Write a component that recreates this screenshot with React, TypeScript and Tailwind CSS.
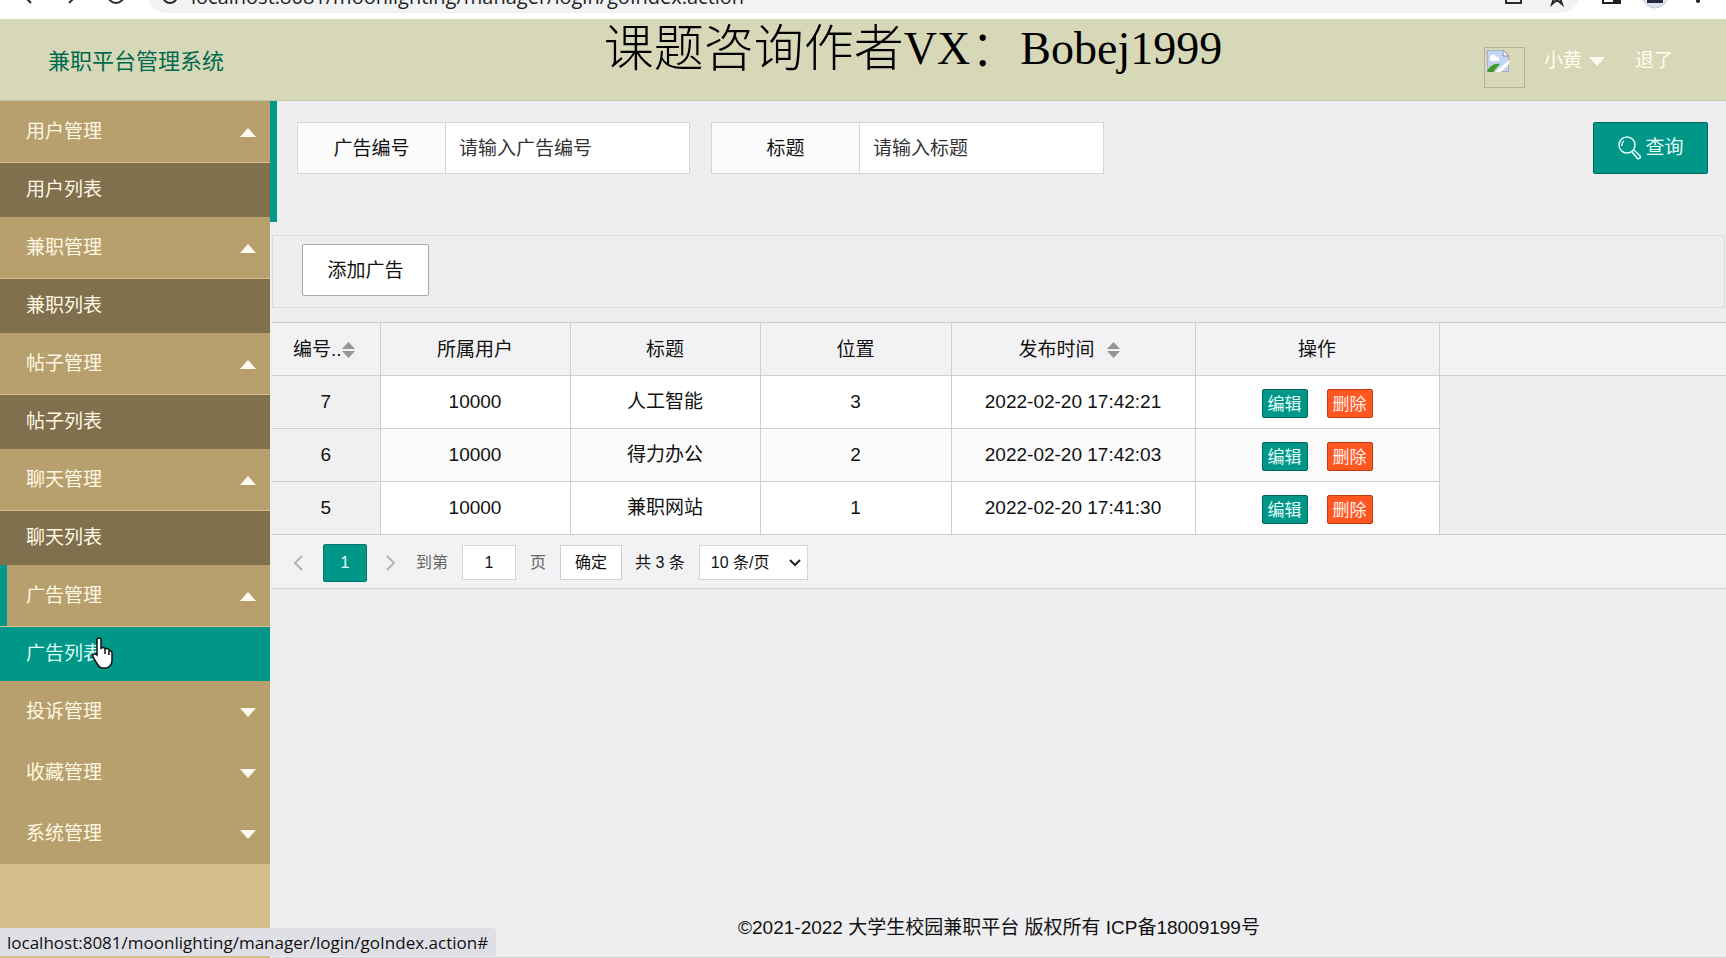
import { useState } from "react";

const menu = [
    { title: "用户管理", child: "用户列表" },
    { title: "兼职管理", child: "兼职列表" },
    { title: "帖子管理", child: "帖子列表" },
    { title: "聊天管理", child: "聊天列表" },
    { title: "广告管理", child: "广告列表" },
    { title: "投诉管理" },
    { title: "收藏管理" },
    { title: "系统管理" },
];

const ads = [
    { id: 7, user: "10000", title: "人工智能", place: 3, time: "2022-02-20 17:42:21" },
    { id: 6, user: "10000", title: "得力办公", place: 2, time: "2022-02-20 17:42:03" },
    { id: 5, user: "10000", title: "兼职网站", place: 1, time: "2022-02-20 17:41:30" },
];

const Triangle = ({ up }: { up?: boolean }) => (
    <svg viewBox="0 0 16 9" className="h-[9px] w-4 fill-[#fffaf0]">
        <path d={up ? "M0 9 8 0l8 9z" : "M0 0h16L8 9z"} />
    </svg>
);

const SortIcon = () => (
    <svg viewBox="0 0 13 18" className="h-[18px] w-[13px] shrink-0 fill-[#959595]">
        <path d="M0 8l6.5-7L13 8zM0 10h13l-6.500 7z" />
    </svg>
);

const BrowserBar = () => (
    <div className="flex h-[19px] shrink-0 items-end overflow-hidden bg-white">
        <svg viewBox="0 0 147 19" className="h-[19px] w-[147px] shrink-0" fill="none" stroke="#2b2b2b" strokeWidth="2">
            <path d="M31 3l-7-7M69 3l7-7" />
            <circle cx="116" cy="-5" r="8" />
        </svg>
        <div className="mb-[6px] flex h-10 grow items-center overflow-hidden rounded-full bg-[#f1f2f4] pt-[8px] pr-4 pl-[14px]">
            <svg viewBox="0 0 18 18" className="h-[18px] w-[18px] shrink-0" fill="none" stroke="#2b2b2b" strokeWidth="2">
                <circle cx="9" cy="8" r="7" />
            </svg>
            <span className="ml-3 grow font-['Open_Sans'] text-[20px] text-[#222]">localhost:8081/moonlighting/manager/login/goIndex.action</span>
            <svg viewBox="0 0 60 20" className="h-5 w-[60px] shrink-0" fill="none" stroke="#2b2b2b" strokeWidth="2">
                <path d="M2 3v13h15v-5M53 2l2 5h5l-4 4 2 6-5-4-5 4 2-6-4-4h5z" />
            </svg>
        </div>
        <svg viewBox="0 0 146 19" className="h-[19px] w-[146px] shrink-0">
            <path d="M23-10h17V3H23z" fill="none" stroke="#222" strokeWidth="2" />
            <path d="M33-9h7V3h-7z" fill="#222" />
            <circle cx="75" cy="-5" r="13" fill="#dfe3f0" stroke="#c5c9d6" />
            <path d="M67-8h16V3H67z" fill="#25293a" />
            <circle cx="118" cy="1" r="2" fill="#222" />
        </svg>
    </div>
);

const Header = () => (
    <header className="flex h-[82px] shrink-0 items-center justify-between border-b border-[#c4c4ae] bg-[#d7d8b8] pt-[4px] pr-[53px] pl-12">
        <h1 className="text-[22px] text-[#006b4f]">兼职平台管理系统</h1>
        <div className="flex items-center text-[19px] text-[#fffff0]">
            <span role="img" aria-label="头像" className="mt-3 h-[41px] w-[41px] border border-[#b3b39c] p-[2px]">
                <svg viewBox="0 0 22 22" className="h-[22px] w-[22px]">
                    <path d="M0 0h16l6 6v16H0z" fill="#c3d5f5" stroke="#8a8f9c" />
                    <path d="M3 8a3 3 0 0 1 6-1 2 2 0 0 1 2 4H3z" fill="#fff" />
                    <path d="M0 22c2-6 7-9 13-8l-7 8z" fill="#3f9a2f" />
                    <path d="M8 22l14-12v4l-8 8z" fill="#fff" />
                    <path d="M16 0v6h6z" fill="#fff" stroke="#8a8f9c" />
                </svg>
            </span>
            <button className="ml-[19px] flex items-center gap-[7px]">小黄<Triangle /></button>
            <a href="#" className="ml-[30px]">退了</a>
        </div>
    </header>
);

const Sidebar = () => {
    const [active, setActive] = useState("广告列表");

    return (
        <nav className="w-[270px] shrink-0 bg-[#d4bd89] text-[19px] text-[#fff8e4]">
            <ul className="bg-[#b7a06d]">
                {menu.map((item) => (
                    <li key={item.title}>
                        <button className={`flex h-[61px] w-full items-center justify-between pt-[2px] pr-[14px] ${item.child === active ? "border-l-[7px] border-[#009688] pl-[19px]" : "pl-[26px]"}`}>
                            {item.title}
                            <Triangle up={!!item.child} />
                        </button>
                        {item.child && (
                            <a
                                href="#"
                                onClick={() => setActive(item.child)}
                                className={`flex h-[55px] items-center border-t border-[#d5bf8c] pl-[26px] ${item.child === active ? "bg-[#009688] text-[#dffff9]" : "bg-[#80704e]"}`}
                            >
                                {item.child}
                            </a>
                        )}
                    </li>
                ))}
            </ul>
        </nav>
    );
};

const SearchField = ({ id, label, hint }: { id: string; label: string; hint: string }) => (
    <div className="flex h-[52px] w-[393px] border border-[#d6d5d6] bg-white">
        <label htmlFor={id} className="flex w-[148px] shrink-0 items-center justify-center border-r border-[#d6d5d6] bg-[#fbfbfb] pt-[2px]">{label}</label>
        <input id={id} placeholder={hint} className="min-w-0 grow px-[13px] pt-[2px] placeholder:text-[#333]" />
    </div>
);

const AdTable = () => (
    <table className="w-full table-fixed border-collapse border-y border-[#cfced0] text-center">
        <colgroup>
            <col className="w-[108px]" />
            <col className="w-[190px]" />
            <col className="w-[190px]" />
            <col className="w-[191px]" />
            <col className="w-[244px]" />
            <col className="w-[244px]" />
            <col />
        </colgroup>
        <thead>
            <tr className="h-[53px] border-b border-[#cfced0] bg-[#f2f1f3] *:border-r *:border-[#cfced0] *:pt-[2px] *:font-normal *:last:border-r-0">
                <th><span className="flex items-center justify-center pr-1">编号..<SortIcon /></span></th>
                <th>所属用户</th>
                <th>标题</th>
                <th>位置</th>
                <th><span className="flex items-center justify-center gap-3 pr-2">发布时间<SortIcon /></span></th>
                <th>操作</th>
                <td></td>
            </tr>
        </thead>
        <tbody>
            {ads.map((ad) => (
                <tr key={ad.id} className="h-[53px] *:border-r *:border-b *:border-[#cfced0] *:bg-white even:*:bg-[#fafafb]">
                    <td className="bg-[#f1f0f1]!">{ad.id}</td>
                    <td>{ad.user}</td>
                    <td>{ad.title}</td>
                    <td>{ad.place}</td>
                    <td>{ad.time}</td>
                    <td>
                        <div className="flex justify-center gap-[19px] pt-[2px] text-[17px]">
                            <button className="h-[29px] w-[46px] rounded-[2px] border border-[#00695c] bg-[#009688] pt-[2px] text-[#e6fffb]">编辑</button>
                            <button className="h-[29px] w-[46px] rounded-[2px] border border-[#c23a10] bg-[#ff5722] pt-[2px] text-[#fff0ea]">删除</button>
                        </div>
                    </td>
                    <td className="border-0! bg-transparent!"></td>
                </tr>
            ))}
        </tbody>
    </table>
);

const Pager = () => (
    <div className="flex h-[54px] items-center border-b border-[#d2d1d3] bg-[#f2f1f3] pt-[2px] pl-[21px] text-[16px]">
        <button aria-label="上一页">
            <svg viewBox="0 0 10 16" className="h-4 w-[10px]" fill="none" stroke="#b5b5b5" strokeWidth="2"><path d="M9 1 2 8l7 7" /></svg>
        </button>
        <button className="ml-5 h-[38px] w-11 rounded-[2px] border border-[#00796b] bg-[#009688] text-[#e6fffb]">1</button>
        <button aria-label="下一页" className="ml-[19px]">
            <svg viewBox="0 0 10 16" className="h-4 w-[10px]" fill="none" stroke="#b5b5b5" strokeWidth="2"><path d="M1 1l7 7-7 7" /></svg>
        </button>
        <label htmlFor="page" className="ml-[20px] text-[#666]">到第</label>
        <input id="page" defaultValue="1" className="ml-[14px] h-[35px] w-[54px] border border-[#d6d5d6] bg-white text-center" />
        <span className="ml-[14px] text-[#666]">页</span>
        <button className="ml-[14px] h-[35px] w-[62px] border border-[#d0cfd1] bg-white">确定</button>
        <span className="ml-[13px]">共 3 条</span>
        <div className="relative ml-[14px]">
            <select aria-label="每页条数" className="h-[35px] w-[109px] appearance-none border border-[#d6d5d6] bg-white pl-[11px]">
                <option>10 条/页</option>
            </select>
            <svg viewBox="0 0 12 8" className="pointer-events-none absolute top-[14px] right-[7px] h-2 w-3" fill="none" stroke="#222" strokeWidth="2"><path d="M1 1l5 5 5-5" /></svg>
        </div>
    </div>
);

const App = () => {
    return (
        <div className="flex min-h-screen flex-col bg-[#eeedef] font-['Liberation_Sans','Noto_Sans_CJK_SC',sans-serif] text-[19px] text-[#111]">
            <BrowserBar />
            <Header />
            <div className="relative flex grow">
                <Sidebar />
                <div className="absolute top-0 left-[270px] h-[121px] w-[7px] bg-[#009688]"></div>
                <main className="flex min-w-0 grow flex-col pl-[2px]">
                    <form className="flex h-[134px] items-start gap-[21px] pt-[21px] pr-[18px] pl-[25px]">
                        <SearchField id="adId" label="广告编号" hint="请输入广告编号" />
                        <SearchField id="adTitle" label="标题" hint="请输入标题" />
                        <button type="button" className="ml-auto flex h-[52px] w-[115px] items-center justify-center gap-1 rounded-[2px] border border-[#00695c] bg-[#009688] text-[#e6fffb]">
                            <svg viewBox="0 0 24 24" className="h-6 w-6" fill="none" stroke="currentColor" strokeWidth="1.500">
                                <circle cx="10" cy="9" r="8" />
                                <path d="M5 10a5 5 0 0 1 2-5M15 16l5 6a1 1 0 0 0 3-2l-6-6" />
                            </svg>
                            查询
                        </button>
                    </form>
                    <div className="mr-[1px] mb-[14px] flex h-[73px] items-start border border-[#dcdbdd] pt-2 pl-[29px]">
                        <button className="h-[52px] w-[127px] rounded-[2px] border border-[#aaa] bg-white pt-[2px]">添加广告</button>
                    </div>
                    <AdTable />
                    <Pager />
                    <footer className="mt-auto flex h-[58px] items-center justify-center border-b border-[#d2d1d3]">
                        ©2021-2022 大学生校园兼职平台 版权所有 ICP备18009199号
                    </footer>
                </main>

                {/* barra de estado */}
                <div className="absolute bottom-[2px] left-0 flex h-[28px] w-[496px] items-center rounded-tr-[4px] bg-[#dfe0e5] pt-[2px] pl-[7px] font-['Open_Sans'] text-[17px]">
                    localhost:8081/moonlighting/manager/login/goIndex.action#
                </div>

                <svg viewBox="0 0 22 32" className="absolute top-[536px] left-[91px] h-8 w-[22px]" fill="#fff" stroke="#111" strokeWidth="1.500">
                    <path d="M6 18V3a2 2 0 0 1 4 0v9V3v9a2 2 0 0 1 4 1v4-4a2 2 0 0 1 4 1v4-4a2 2 0 0 1 3 2v8c0 3-3 7-6 7h-4c-3 0-4-3-9-11-1-3 2-4 4-2z" />
                </svg>
            </div>

            <div className="pointer-events-none absolute inset-x-0 top-[22px] flex items-center justify-center pl-[100px] text-[50px] leading-[54px] font-light text-black">
                <span>课题咨询作者</span>
                <span className="font-['Liberation_Serif'] text-[46px]">VX</span>
                <span>：</span>
                <span className="font-['Liberation_Serif'] text-[46px]">Bobej1999</span>
            </div>
        </div>
    );
};

export default App
